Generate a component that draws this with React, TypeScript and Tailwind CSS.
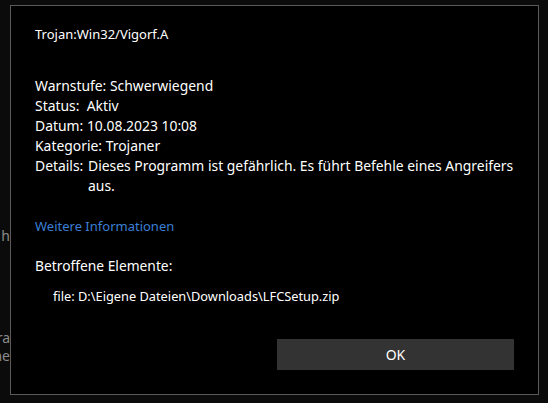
export default function App() {
  const rows = [
    ['Warnstufe:', 'Schwerwiegend'],
    ['Status:\u00a0', 'Aktiv'],
    ['Datum:', '10.08.2023 10:08'],
    ['Kategorie:', 'Trojaner'],
  ];

  return (
    <div className="w-[548px] h-[403px] bg-[#0b0b0b] flex overflow-hidden" style={{ fontFamily: '"Noto Sans", "Open Sans", sans-serif' }}>
      {/* window behind the dialog, only its edge is visible */}
      <div className="w-[10px] overflow-hidden text-[#8a8a8a] text-[14px] leading-[18px] whitespace-nowrap flex flex-col items-end">
        <div className="mt-[227px]">h</div>
        <div className="mt-[84px]">ra</div>
        <div>ne</div>
      </div>

      <div className="mt-[5px] w-[529px] h-[390px] border border-[#5a5a5a] bg-black text-white flex flex-col pl-[24px] pr-[24px] pt-[18px]">
        <div className="text-[13px] leading-[20px]">Trojan:Win32/Vigorf.A</div>

        <div className="mt-[32px] text-[13.9px] leading-[20px]">
          {rows.map(([label, value]) => (
            <div key={label}>
              {label} {value}
            </div>
          ))}
          <div className="flex">
            <span className="shrink-0 w-[53px]">Details:</span>
            <span>Dieses Programm ist gefährlich. Es führt Befehle eines Angreifers aus.</span>
          </div>
        </div>

        <a className="mt-[20px] text-[13px] leading-[20px] text-[#3b7fd4]">Weitere Informationen</a>

        <div className="mt-[20px] text-[13.8px] leading-[20px]">Betroffene Elemente:</div>
        <div className="mt-[10px] pl-[18px] text-[12.8px] leading-[20px]">
          file: D:\Eigene Dateien\Downloads\LFCSetup.zip
        </div>

        <div className="mt-[33px] flex justify-end">
          <button className="w-[237px] h-[31px] bg-[#333333] text-white text-[14px]">OK</button>
        </div>
      </div>
    </div>
  );
}
